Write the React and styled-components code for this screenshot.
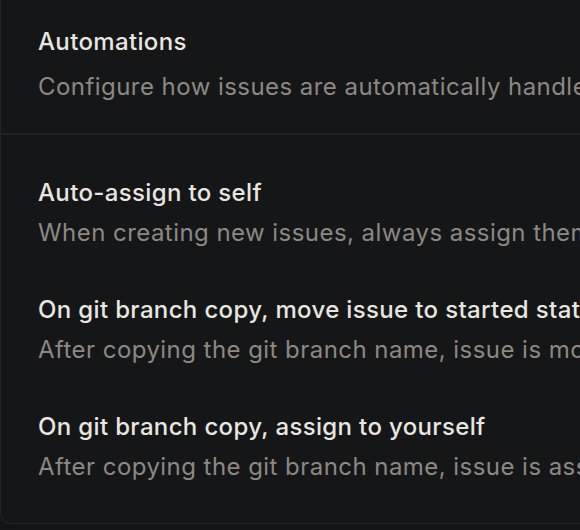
import styled, { createGlobalStyle } from "styled-components";

const Global = createGlobalStyle`
  html, body {
    margin: 0;
    padding: 0;
    background: #131416;
  }
  body {
    font-family: Inter, "Noto Sans", sans-serif;
    -webkit-font-smoothing: antialiased;
  }
`;

const Card = styled.div`
  width: 620px;
  height: 524px;
  box-sizing: border-box;
  background: #151618;
  border: 1px solid #232427;
  border-top: none;
  border-radius: 0 0 10px 10px;
  overflow: hidden;
`;

const Header = styled.div`
  padding: 26px 0 30px 37px;
  border-bottom: 2px solid #202124;
`;

const Title = styled.div`
  font-size: 24px;
  line-height: 32px;
  font-weight: 500;
  color: #e9e6e0;
  letter-spacing: 0.35px;
  white-space: nowrap;
`;

const Desc = styled.div`
  font-size: 24px;
  line-height: 32px;
  font-weight: 400;
  color: #8c8883;
  letter-spacing: 0.45px;
  margin-top: ${(p) => p.$gap || 8}px;
  white-space: nowrap;
`;

const List = styled.div`
  display: flex;
  flex-direction: column;
  gap: 45px;
  padding: 42px 0 0 37px;
`;

const Row = styled.div`
  display: flex;
  flex-direction: column;
`;

const rows = [
  {
    title: "Auto-assign to self",
    desc: "When creating new issues, always assign them to yourself by default",
  },
  {
    title: "On git branch copy, move issue to started status",
    desc: "After copying the git branch name, issue is moved to the started status",
  },
  {
    title: "On git branch copy, assign to yourself",
    desc: "After copying the git branch name, issue is assigned to yourself",
  },
];

export default function App() {
  return (
    <>
      <Global />
      <Card>
        <Header>
          <Title>Automations</Title>
          <Desc $gap={13}>Configure how issues are automatically handled in your workspace</Desc>
        </Header>
        <List>
          {rows.map((r) => (
            <Row key={r.title}>
              <Title>{r.title}</Title>
              <Desc>{r.desc}</Desc>
            </Row>
          ))}
        </List>
      </Card>
    </>
  );
}
